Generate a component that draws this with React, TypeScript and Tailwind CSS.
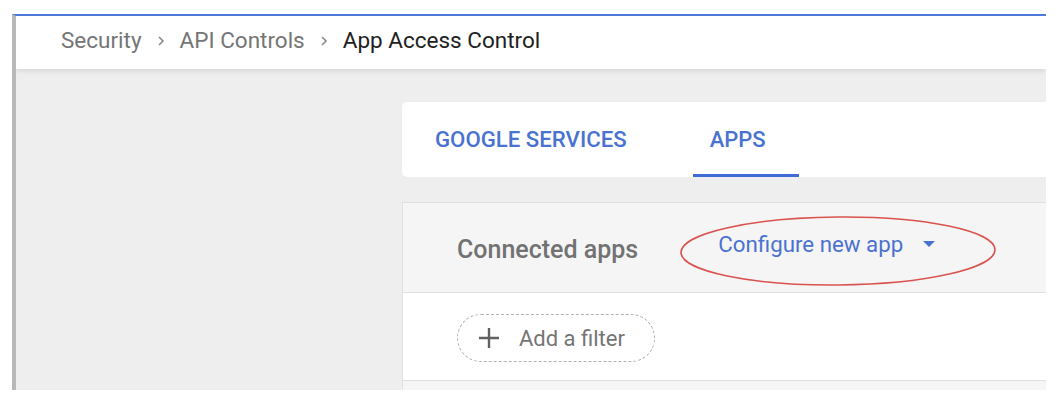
import React from "react";

function Chevron() {
  return (
    <svg width="8" height="12" viewBox="0 0 8 12" className="mx-[15px]">
      <path d="M2 2 L6 6 L2 10" fill="none" stroke="#8a8a8a" strokeWidth="1.6" />
    </svg>
  );
}

export default function App() {
  return (
    <div
      className="w-[1062px] h-[400px] bg-white pt-[14px] pl-[12px] overflow-hidden"
      style={{ fontFamily: "Roboto, 'Liberation Sans', sans-serif" }}
    >
      <div className="w-[1034px] h-[376px] flex flex-col border-l-4 border-l-[#b8b8b8] border-t-2 border-t-[#4a7bd8] bg-[#eeeeee] overflow-hidden">
        <div className="h-[53px] shrink-0 bg-white flex items-center pl-[45px] pb-[4px] shadow-[0_2px_5px_rgba(0,0,0,0.10)] relative z-10 text-[22.5px]">
          <span className="text-[#757575]">Security</span>
          <Chevron />
          <span className="text-[#757575]">API Controls</span>
          <Chevron />
          <span className="text-[#212121]">App Access Control</span>
        </div>
        <div className="pl-[386px] pt-[33px] flex flex-col">
          <div className="h-[75px] w-[700px] bg-white rounded-[5px] flex items-stretch">
            <div className="ml-[33px] flex items-center text-[22.2px] font-medium text-[#4a72d0]">
              GOOGLE SERVICES
            </div>
            <div className="ml-[66px] pl-[17px] pr-[33px] flex items-center text-[22px] font-medium text-[#4a72d0] border-b-[3px] border-b-[#3f6bd6] pt-[3px]">
              APPS
            </div>
          </div>
          <div className="mt-[25px] w-[700px] border-l border-t border-[#e0e0e0] flex flex-col">
            <div className="h-[90px] bg-[#f5f5f5] border-b border-[#e0e0e0] flex items-center relative">
              <div className="ml-[54px] text-[25px] font-medium text-[#727272] pt-[4px]">Connected apps</div>
              <div className="ml-[80px] flex items-center text-[22.3px] text-[#4a72d0] pb-[6px]">
                <span>Configure new app</span>
                <svg width="12" height="7" viewBox="0 0 12 7" className="ml-[20px]">
                  <path d="M0 0 L12 0 L6 6 Z" fill="#4a72d0" />
                </svg>
              </div>
              <svg
                className="absolute left-[274px] top-[10px]"
                width="326"
                height="80"
                viewBox="0 0 326 80"
              >
                <ellipse
                  cx="161"
                  cy="38"
                  rx="157"
                  ry="34"
                  fill="none"
                  stroke="#d9534f"
                  strokeWidth="1.6"
                  transform="rotate(-0.5 161 38)"
                />
              </svg>
            </div>
            <div className="h-[88px] bg-white flex items-start pt-[21px] pl-[54px] border-b border-[#e0e0e0]">
              <div className="h-[48px] w-[198px] rounded-full border-[1.5px] border-dashed border-[#b0b0b0] flex items-center pl-[21px]">
                <svg width="20" height="20" viewBox="0 0 20 20">
                  <path d="M10 0 V20 M0 10 H20" stroke="#616161" strokeWidth="2.4" />
                </svg>
                <span className="ml-[20px] text-[22px] text-[#757575]">Add a filter</span>
              </div>
            </div>
            <div className="h-[20px] bg-[#f5f5f5]" />
          </div>
        </div>
      </div>
    </div>
  );
}
